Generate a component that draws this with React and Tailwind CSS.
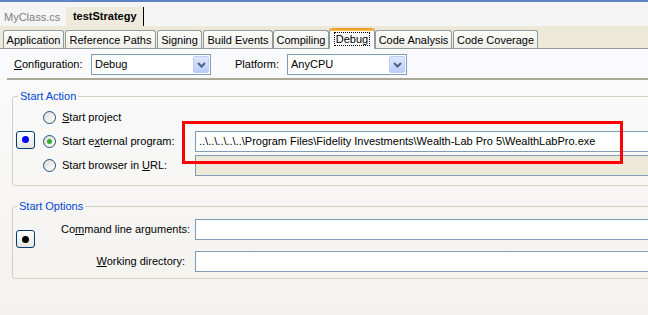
import React from 'react';

const tabs = [
  { label: 'Application', cls: 'ml-[3px] w-[61px]' },
  { label: 'Reference Paths', cls: 'ml-[1px] w-[91px]' },
  { label: 'Signing', cls: 'ml-[1px] w-[45px]' },
  { label: 'Build Events', cls: 'ml-[1px] w-[70px]' },
  { label: 'Compiling', cls: 'w-[56px]' },
  { label: 'Debug', cls: 'w-[46px]', active: true },
  { label: 'Code Analysis', cls: 'w-[77px]' },
  { label: 'Code Coverage', cls: 'ml-[1px] w-[85px]' },
];

const Chevron = () => (
  <svg width="9" height="6" viewBox="0 0 9 6">
    <path d="M1 1 L4.5 4.5 L8 1" fill="none" stroke="#4d6185" strokeWidth="2" />
  </svg>
);

const Dropdown = ({ value, className }) => (
  <div className={`h-[21px] border border-[#7f9db9] bg-white flex items-center ${className}`}>
    <span className="flex-1 pl-[3px]">{value}</span>
    <span className="w-[16px] h-[17px] mr-px rounded-[2px] border border-[#bccdf7] bg-linear-to-b from-[#e0e8fd] to-[#b9cdfb] flex items-center justify-center">
      <Chevron />
    </span>
  </div>
);

const Radio = ({ checked }) => (
  <span className="w-[13px] h-[13px] shrink-0 rounded-full border border-[#1c5180] bg-linear-to-br from-[#dcdcd4] to-white flex items-center justify-center">
    {checked && <span className="w-[5px] h-[5px] rounded-full bg-[#2fb12f]" />}
  </span>
);

const TextBox = ({ value, disabled }) => (
  <div
    className={`flex-1 h-[21px] border border-[#7f9db9] flex items-center pl-[3px] overflow-hidden ${
      disabled ? 'bg-[#ece9d8]' : 'bg-white'
    }`}
  >
    {value}
  </div>
);

const SquareBtn = ({ dot, className }) => (
  <div
    className={`w-[19px] h-[18px] shrink-0 rounded-[3px] border border-[#003c74] bg-linear-to-b from-white to-[#e6e4dc] flex items-center justify-center ${className}`}
  >
    <span className={`w-[7px] h-[7px] rounded-full ${dot}`} />
  </div>
);

const App = () => {
  return (
    <div className="relative w-[648px] h-[315px] overflow-hidden flex flex-col whitespace-nowrap text-[11px] leading-[13px] text-black font-[family-name:'Liberation_Sans',Arial,sans-serif]">
      {/* top window edge */}
      <div className="h-[2px] bg-[#5d84c3]" />

      {/* document tabs */}
      <div className="h-[24px] bg-[#f5f5f5] flex items-end pl-[3px]">
        <div className="h-[18px] flex items-center px-px text-[#7f7f7f]">MyClass.cs</div>
        <div className="ml-[5px] h-[19px] w-[78px] flex items-center justify-center bg-[#eeebdc] font-bold border-r border-black">
          testStrategy
        </div>
      </div>

      {/* property page tabs */}
      <div className="h-[23px] bg-[#ece9d8] flex items-end border-b border-[#919b9c]">
        {tabs.map((t) =>
          t.active ? (
            <div
              key={t.label}
              className={`relative z-10 -mb-px h-[21px] rounded-t-[3px] border-x border-[#919b9c] bg-[#fcfcfe] flex flex-col ${t.cls}`}
            >
              <div className="h-[3px] rounded-t-[3px] bg-linear-to-b from-[#e68b2c] to-[#ffc73c]" />
              <div className="flex-1 flex items-start justify-center pt-px">
                <span className="border border-dotted border-black px-px leading-[12px]">{t.label}</span>
              </div>
            </div>
          ) : (
            <div
              key={t.label}
              className={`h-[18px] pt-px rounded-t-[3px] border border-b-0 border-[#919b9c] bg-linear-to-b from-[#fefefe] to-[#efeee8] flex items-center justify-center ${t.cls}`}
            >
              {t.label}
            </div>
          )
        )}
      </div>

      {/* page content */}
      <div className="flex-1 flex flex-col bg-linear-to-b from-[#fbfbfd] to-[#f3f2ee]">
        <div className="mt-[5px] flex items-center">
          <span className="pl-[14px] w-[91px]">
            <u>C</u>onfiguration:
          </span>
          <Dropdown value="Debug" className="w-[120px]" />
          <span className="ml-[24px] w-[52px]">Platform:</span>
          <Dropdown value="AnyCPU" className="w-[120px]" />
        </div>

        <div className="mt-[3px] ml-[7px] h-[2px] bg-[#aca899]" />

        <fieldset className="mt-[10px] ml-[12px] w-[680px] border border-[#d0d0bf] rounded-[3px] pt-[4px] pb-[9px]">
          <legend className="ml-[5px] px-[2px] text-[#0046d5]">Start Action</legend>
          <div className="flex items-center">
            <SquareBtn dot="bg-[#0000ff]" className="ml-[3px] -mt-[4px]" />
            <div className="ml-[8px] flex-1 flex flex-col gap-[3px]">
              <div className="h-[21px] flex items-center">
                <Radio />
                <span className="ml-[6px]">
                  <u>S</u>tart project
                </span>
              </div>
              <div className="h-[21px] flex items-center">
                <Radio checked />
                <span className="ml-[6px] w-[133px] shrink-0">
                  Start e<u>x</u>ternal program:
                </span>
                <TextBox value="..\..\..\..\..\Program Files\Fidelity Investments\Wealth-Lab Pro 5\WealthLabPro.exe" />
              </div>
              <div className="h-[21px] flex items-center">
                <Radio />
                <span className="ml-[6px] w-[133px] shrink-0">
                  Start browser in <u>U</u>RL:
                </span>
                <TextBox disabled />
              </div>
            </div>
          </div>
        </fieldset>

        <fieldset className="mt-[14px] ml-[12px] w-[680px] border border-[#d0d0bf] rounded-[3px] pt-[6px] pb-[6px]">
          <legend className="ml-[4px] px-[2px] text-[#0046d5]">Start Options</legend>
          <div className="flex">
            <SquareBtn dot="bg-black" className="ml-[3px] mt-[11px]" />
            <div className="flex-1 flex flex-col gap-[11px]">
              <div className="h-[21px] flex items-center">
                <span className="w-[160px] shrink-0 pr-[5px] text-right">
                  Co<u>m</u>mand line arguments:
                </span>
                <TextBox />
              </div>
              <div className="h-[21px] flex items-center">
                <span className="w-[160px] shrink-0 pr-[10px] text-right">
                  <u>W</u>orking directory:
                </span>
                <TextBox />
              </div>
            </div>
          </div>
        </fieldset>
      </div>

      {/* red highlight annotation */}
      <div className="absolute left-[182px] top-[121px] w-[441px] h-[43px] border-[3px] border-[#ff0000]" />
    </div>
  );
};

export default App;
